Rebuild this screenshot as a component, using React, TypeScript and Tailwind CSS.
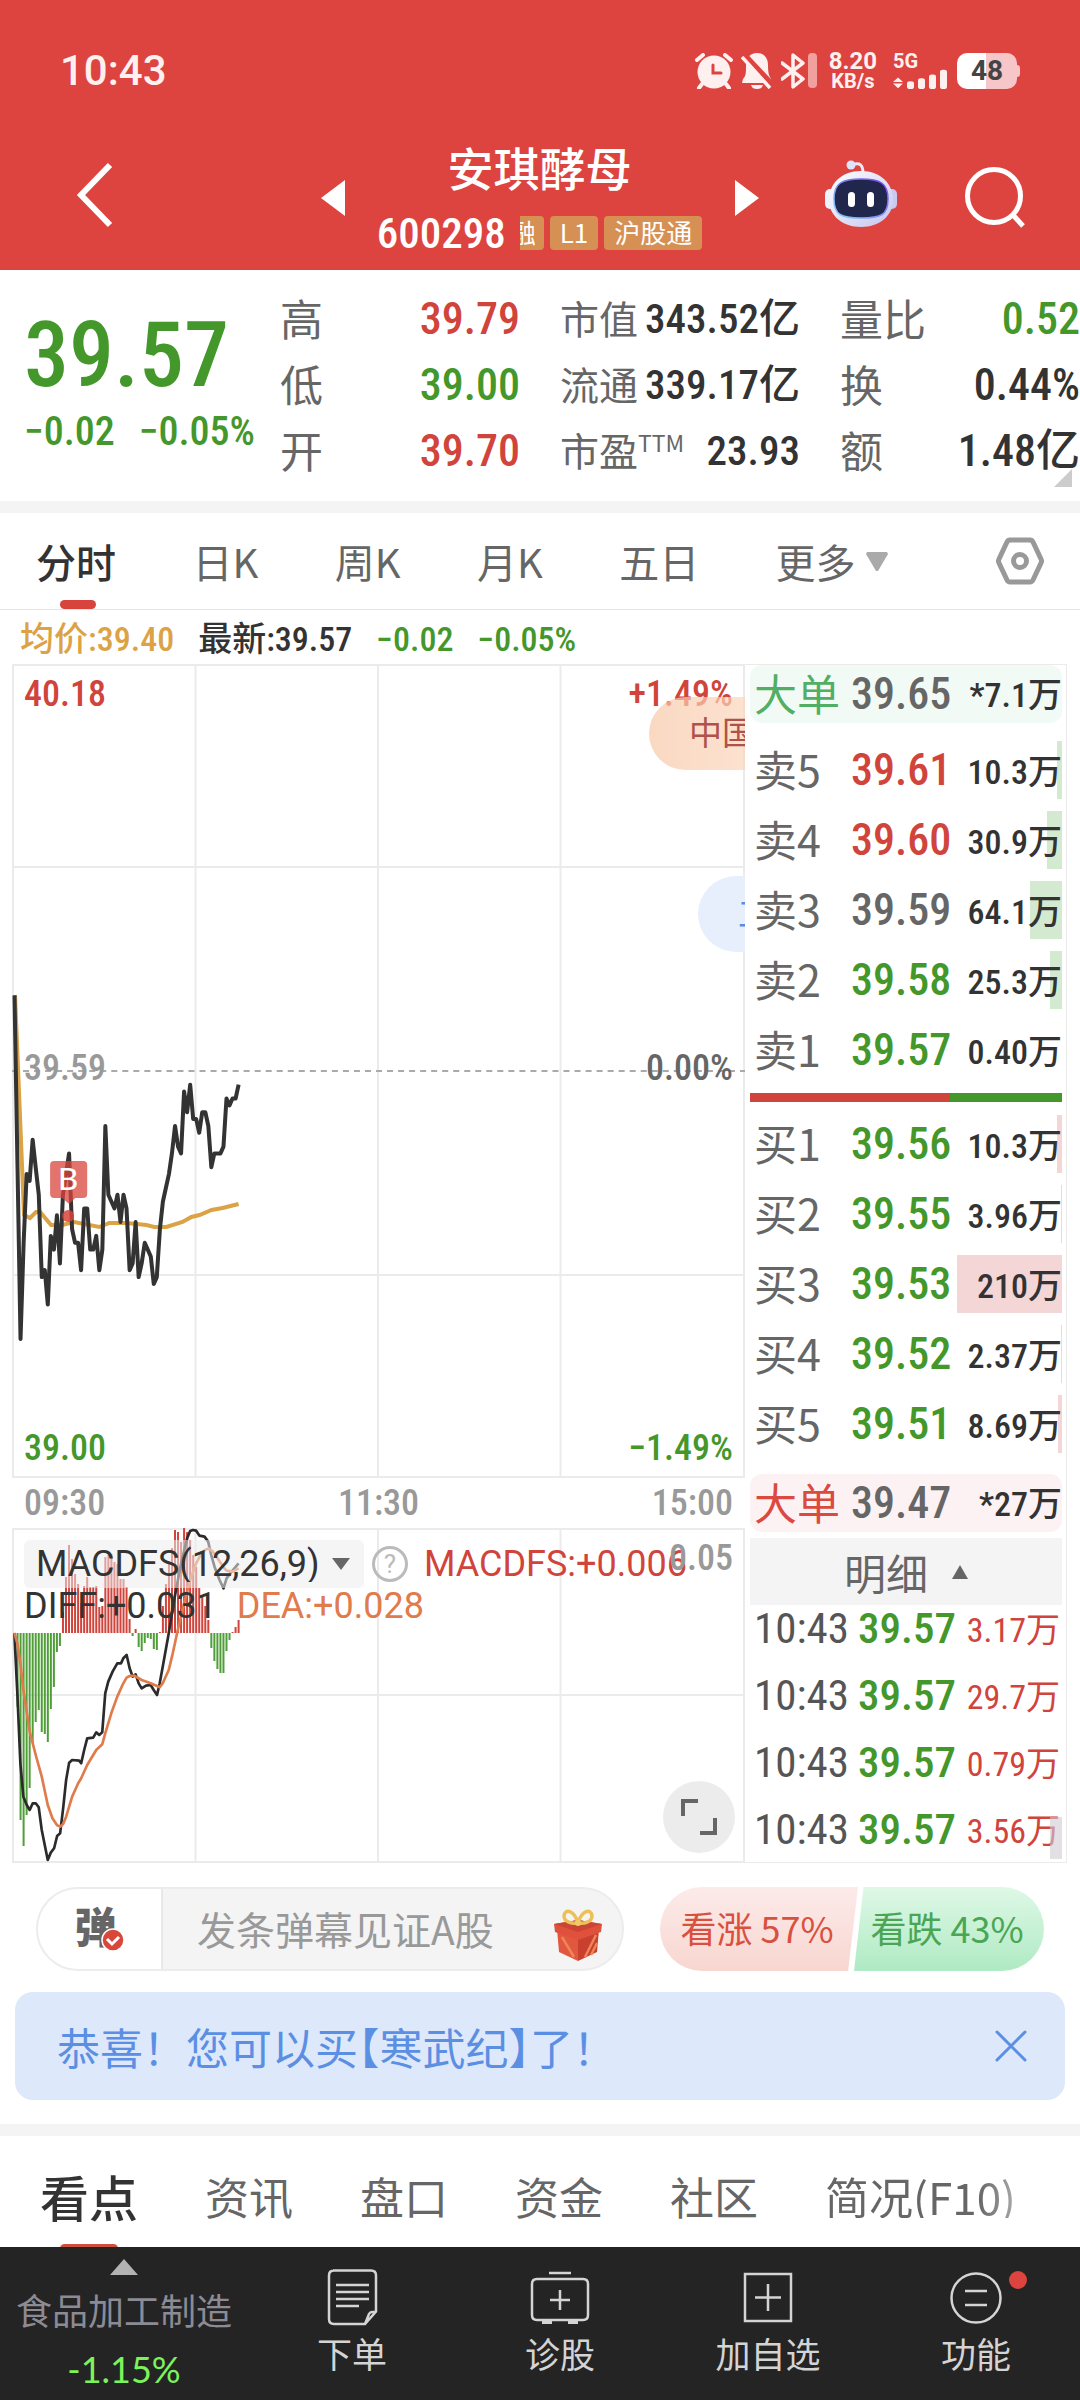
import React from 'react';

const NUM = "[font-family:'Roboto_Condensed','Liberation_Sans_Narrow',Roboto,'Noto_Sans_CJK_SC',sans-serif]";

const RED = 'text-[#d0443c]';
const GREEN = 'text-[#44972b]';
const GRAY = 'text-[#666666]';
const DARK = 'text-[#333333]';

const PREV_CLOSE = 39.59;
const MINUTE = 3.02;

// Last price of every minute since 09:30, in cents above 39.00
const prices = [
  70, 45, 20, 34, 44, 43, 49, 45, 41, 29, 30, 25, 35, 33, 38, 31, 41, 44, 47, 36, 34, 34, 30, 39, 39,
  33, 33, 35, 30, 33, 51, 41, 40, 39, 41, 37, 41, 39, 30, 31, 37, 29, 31, 34, 33, 32, 28, 29, 36, 40,
  42, 44, 47, 51, 48, 47, 56, 53, 57, 52, 52, 50, 53, 53, 51, 45, 47, 47, 47, 48, 55, 54, 55, 55, 57,
];

const macdBars = [
  0, -74, -187, -213, -182, -155, -110, -89, -77, -99, -101, -109, -76, -54, -19, -13, 21, 56, 88, 74, 59, 49, 30, 47, 56,
  46, 46, 47, 26, 27, 76, 78, 79, 71, 69, 54, 54, 46, 14, -3, 4, -14, -18, -10, -5, -6, -16, -17, 1, 27,
  49, 71, 85, 103, 101, 91, 105, 101, 93, 78, 66, 45, 36, 27, 13, -15, -28, -36, -40, -40, -18, -7, 1, 6, 13,
];

const pricePoints = prices
  .map((p, i) => `${(2.5 + i * MINUTE).toFixed(1)},${(407 + (PREV_CLOSE * 100 - 3900 - p) * 6.87).toFixed(1)}`)
  .join(' ');

const avgPoints =
  '3,331 12,551 18,554 24,548 28,548 39,561 50,561 62,558 87,563 97,559 114,559 134,561 142,563 154,563 170,558 179,553 187,551 199,546 210,544 226,540';

const diffPoints =
  '46,459 55,640 64,850 73,950 83,975 92,990 101,970 110,970 119,982 128,1050 146,1140 155,1118 165,1105 174,1068 183,1060 192,985 201,900 210,848 219,840 240,842 246,850 255,810 264,775 282,773 291,757 300,765 309,757 318,640 327,605 340,575 354,550 365,550 372,535 382,525 391,565 400,590 409,583 418,610 427,625 440,617 454,615 463,630 473,645 481,610 490,560 508,460 526,350 545,250 563,175 572,153 580,150 590,152 600,167 615,170 626,185 635,225 645,260 660,300 672,325 681,295 700,270 717,250';

const deaPoints =
  '46,459 55,490 64,550 73,630 92,755 110,825 128,890 146,975 160,1015 174,1036 183,1040 192,1032 201,1010 219,950 237,910 246,895 264,855 291,810 309,793 318,760 336,700 354,650 372,610 382,593 391,588 405,587 427,600 454,610 481,622 490,610 508,570 520,520 535,450 554,370 572,300 590,250 605,222 617,210 627,205 640,215 654,235 672,262 681,272 700,275 717,265';

interface Level {
  label: string;
  price: string;
  volume: string;
  bar: number;
  color: string;
}

const sells: Level[] = [
  { label: '卖5', price: '39.61', volume: '10.3万', bar: 5, color: RED },
  { label: '卖4', price: '39.60', volume: '30.9万', bar: 15, color: RED },
  { label: '卖3', price: '39.59', volume: '64.1万', bar: 32, color: GRAY },
  { label: '卖2', price: '39.58', volume: '25.3万', bar: 12, color: GREEN },
  { label: '卖1', price: '39.57', volume: '0.40万', bar: 0, color: GREEN },
];

const buys: Level[] = [
  { label: '买1', price: '39.56', volume: '10.3万', bar: 5, color: GREEN },
  { label: '买2', price: '39.55', volume: '3.96万', bar: 1, color: GREEN },
  { label: '买3', price: '39.53', volume: '210万', bar: 105, color: GREEN },
  { label: '买4', price: '39.52', volume: '2.37万', bar: 1, color: GREEN },
  { label: '买5', price: '39.51', volume: '8.69万', bar: 4, color: GREEN },
];

const trades = ['3.17万', '29.7万', '0.79万', '3.56万'];

const StatusBar: React.FC = () => (
  <div className="flex h-[142px] items-center justify-between pl-15 pr-15 text-[#fff0f0]">
    <span className="font-[Roboto] text-[42px] font-medium leading-none">10:43</span>
    <div className="flex items-center gap-2">
      <svg className="h-9 w-[38px]" viewBox="0 0 38 36" fill="none" stroke="currentColor" strokeWidth="4" strokeLinecap="round">
        <circle cx="19" cy="19" r="16.5" fill="currentColor" stroke="none" />
        <path d="M2 7 8 2M36 7l-6-5M7 31l-3 4M31 31l3 4" />
        <path d="M18 12v8h8" stroke="#dd443f" strokeWidth="3" />
      </svg>
      <svg className="h-9 w-8" viewBox="0 0 32 36" fill="none">
        <path d="M16 0c7 0 11 5 11 12 0 8 1 11 3 14l1 4H1l1-4c3-3 3-6 3-14C5 5 9 0 16 0Z" fill="currentColor" />
        <path d="M10 32h12c-1 3-3 4-6 4s-5-1-6-4Z" fill="currentColor" />
        <path d="M3 1l29 31" stroke="#dd443f" strokeWidth="5" />
        <path d="M1 4l28 31" stroke="currentColor" strokeWidth="3.5" />
      </svg>
      <svg className="h-9 w-9" viewBox="0 0 36 36" fill="none">
        <path d="M1 10l21 16-10 8V2l10 8L1 26" stroke="currentColor" strokeWidth="3.5" strokeLinejoin="round" strokeLinecap="round" />
        <rect x="27" y="0" width="9" height="35" rx="4" fill="#f2a09e" />
      </svg>
      <div className="ml-1 flex flex-col items-center font-[Roboto] font-bold">
        <span className="text-[24px] leading-5">8.20</span>
        <span className="text-[20px] leading-5">KB/s</span>
      </div>
      <div className="ml-2 flex flex-col items-start">
        <span className="font-[Roboto] text-[20px] font-bold leading-4">5G</span>
        <svg className="h-5 w-[54px]" viewBox="0 0 54 26" preserveAspectRatio="none" fill="currentColor">
          <path d="M5 11l5 6H0zM5 25l5-6H0z" />
          <rect x="14" y="16" width="7" height="10" rx="3" />
          <rect x="25" y="12" width="7" height="14" rx="3" />
          <rect x="36" y="7" width="7" height="19" rx="3" />
          <rect x="47" y="1" width="7" height="25" rx="3" />
        </svg>
      </div>
      <div className="ml-0.5 flex items-center">
        <div className="flex h-9 w-[60px] items-center justify-center rounded-[10px] bg-linear-to-r from-white from-48% to-[#f6c6c8] to-48%">
          <span className="font-[Roboto] text-[28px] font-bold leading-none text-[#444444]">48</span>
        </div>
        <div className="h-3 w-[3px] rounded-r-sm bg-[#f6c6c8]" />
      </div>
    </div>
  </div>
);

const RobotIcon: React.FC = () => (
  <svg className="h-[68px] w-[72px]" viewBox="0 0 72 68">
    <defs>
      <linearGradient id="shell" x1="0" y1="0" x2="1" y2="1">
        <stop offset="0" stopColor="#ffffff" />
        <stop offset="1" stopColor="#c5c5ee" />
      </linearGradient>
      <linearGradient id="rim" x1="0" y1="1" x2="1" y2="0">
        <stop offset="0" stopColor="#7fd4f5" />
        <stop offset="1" stopColor="#7d3ff0" />
      </linearGradient>
    </defs>
    <path d="M27 5c8-3 11 0 11 8" fill="none" stroke="#e8e8fb" strokeWidth="3" />
    <circle cx="26" cy="5" r="4.5" fill="#dfe3fa" />
    <rect x="0" y="29" width="12" height="20" rx="5" fill="#eef0fc" />
    <rect x="60" y="29" width="12" height="20" rx="5" fill="#c9caf2" />
    <path d="M36 11c20 0 32 13 32 29S54 67 36 67 4 56 4 40 16 11 36 11Z" fill="url(#shell)" />
    <path d="M36 19c19 0 27 4 27 20s-7 19-27 19S9 55 9 39s8-20 27-20Z" fill="#20264c" stroke="url(#rim)" strokeWidth="1.5" />
    <rect x="23" y="32" width="7" height="15" rx="3.5" fill="#fff" />
    <rect x="42" y="32" width="7" height="15" rx="3.5" fill="#fff" />
  </svg>
);

const Header: React.FC = () => (
  <header className="bg-[#dd443f] text-white">
    <StatusBar />
    <div className="flex h-32 items-start justify-between pl-[76px] pr-[54px]">
      <button aria-label="返回" className="mt-5">
        <svg className="h-[66px] w-[38px]" viewBox="0 0 38 66" fill="none" stroke="currentColor" strokeWidth="6">
          <path d="M34 3 5 33l29 30" />
        </svg>
      </button>
      <div className="ml-[140px] flex items-start">
        <button aria-label="上一只" className="mt-[38px]">
          <svg className="h-9 w-6" viewBox="0 0 24 36" fill="currentColor"><path d="M0 18 24 0v36z" /></svg>
        </button>
        <div className="flex w-[390px] flex-col items-center">
          <h1 className="font-['Noto_Sans_CJK_SC'] text-[46px] font-medium leading-[48px]">安琪酵母</h1>
          <div className="mt-6 flex items-center gap-1.5">
            <span className={`${NUM} mr-2 text-[43px] font-medium leading-[38px]`}>600298</span>
            <span className="flex h-[34px] w-6 justify-end overflow-hidden rounded-r bg-[#d79053] pr-2 font-['Noto_Sans_CJK_SC'] text-[26px] leading-[32px]">融</span>
            <span className="h-[34px] rounded bg-[#d79053] px-2.5 font-['Noto_Sans_CJK_SC'] text-[26px] leading-[32px]">L1</span>
            <span className="h-[34px] rounded bg-[#d79053] px-2.5 font-['Noto_Sans_CJK_SC'] text-[26px] leading-[32px]">沪股通</span>
          </div>
        </div>
        <button aria-label="下一只" className="mt-[38px]">
          <svg className="h-9 w-6" viewBox="0 0 24 36" fill="currentColor"><path d="M24 18 0 0v36z" /></svg>
        </button>
      </div>
      <div className="flex items-start gap-[68px]">
        <button aria-label="智能助手" className="mt-[18px]"><RobotIcon /></button>
        <button aria-label="搜索" className="mt-[25px]">
          <svg className="h-[61px] w-[61px]" viewBox="0 0 61 61" fill="none" stroke="currentColor" strokeWidth="5">
            <circle cx="29" cy="29" r="26.5" />
            <path d="m48 48 10 11" />
          </svg>
        </button>
      </div>
    </div>
  </header>
);

const Stat: React.FC<{ label: React.ReactNode; value: string; color: string; small?: boolean }> = ({ label, value, color, small }) => (
  <div className="flex h-[66px] items-center justify-between">
    <dt className={`flex whitespace-nowrap pb-1 text-[#666666] ${small ? 'text-[39px]' : 'text-[43px]'}`}>{label}</dt>
    <dd className={`${NUM} whitespace-nowrap font-medium ${color} ${small ? 'text-[41px]' : 'text-[44px]'}`}>{value}</dd>
  </div>
);

const Quote: React.FC = () => (
  <section className="relative flex h-[231px] pt-4 leading-none">
    <div className="w-[280px] shrink-0 pl-6">
      <p className={`${NUM} mt-6 text-[90px] font-medium leading-[92px] text-[#44972b]`}>39.57</p>
      <p className={`${NUM} mt-2 flex gap-6 whitespace-nowrap text-[40px] font-medium leading-[44px] text-[#44972b]`}>
        <span>−0.02</span>
        <span>−0.05%</span>
      </p>
    </div>
    <dl className="grid h-[198px] flex-1 grid-cols-3 gap-x-10">
      <Stat label="高" value="39.79" color={RED} />
      <Stat label="市值" value="343.52亿" color={DARK} small />
      <Stat label="量比" value="0.52" color={GREEN} />
      <Stat label="低" value="39.00" color={GREEN} />
      <Stat label="流通" value="339.17亿" color={DARK} small />
      <Stat label="换" value="0.44%" color={DARK} />
      <Stat label="开" value="39.70" color={RED} />
      <Stat label={<>市盈<sup className="top-0 self-start text-[23px] leading-6">TTM</sup></>} value="23.93" color={DARK} small />
      <Stat label="额" value="1.48亿" color={DARK} />
    </dl>
    <svg className="absolute bottom-3.5 right-2 h-[18px] w-[18px]" viewBox="0 0 18 18" fill="#cccccc"><path d="M18 0v18H0z" /></svg>
  </section>
);

const PeriodTabs: React.FC = () => (
  <nav className="flex h-[97px] items-center justify-between border-b border-[#e5e5e5] pl-9 pr-9 text-[40px] leading-none text-[#666666]">
    <button className="relative h-full font-medium text-[#333333]">
      分时
      <span className="absolute bottom-0 left-6 h-[9px] w-9 rounded-full bg-[#d8443c]" />
    </button>
    <button>日K</button>
    <button>周K</button>
    <button>月K</button>
    <button>五日</button>
    <button className="flex items-center gap-2.5">
      更多
      <svg className="h-[19px] w-[22px]" viewBox="0 0 22 19" fill="#aaaaaa"><path d="M1 0h20l1 2-10 17h-2L0 2z" /></svg>
    </button>
    <button aria-label="设置" className="ml-8">
      <svg className="h-12 w-12" viewBox="0 0 48 48" fill="none" stroke="#999999" strokeWidth="5" strokeLinejoin="round">
        <path d="M14 3h20q2 0 3 2l8 17q1 2 0 4l-8 17q-1 2-3 2H14q-2 0-3-2L3 26q-1-2 0-4l8-17q1-2 3-2Z" />
        <circle cx="24" cy="24" r="6.5" />
      </svg>
    </button>
  </nav>
);

const PriceChart: React.FC = () => (
  <div className={`${NUM} relative h-[814px] overflow-hidden text-[36px] font-medium leading-none`}>
    <svg className="absolute inset-0 h-full w-full" viewBox="0 0 731 814" preserveAspectRatio="none" fill="none">
      <path d="M1 0v814M183 0v814M365 0v814M547 0v814M730 0v814M0 1h731M0 203h731M0 611h731M0 813h731" stroke="#ebebeb" strokeWidth="2" />
      <path d="M0 407h731" stroke="#aaaaaa" strokeWidth="2" strokeDasharray="6 5" />
      <polyline points={avgPoints} stroke="#dba345" strokeWidth="4" />
      <polyline points={pricePoints} stroke="#333333" strokeWidth="4" strokeLinejoin="round" />
      <rect x="38" y="497" width="37" height="37" rx="4" fill="#d8443c" fillOpacity="0.75" />
      <path d="M50 534h13l-6 6z" fill="#d8443c" fillOpacity="0.75" />
      <circle cx="56" cy="552" r="6" fill="#d8443c" fillOpacity="0.85" />
      <text x="56" y="526" textAnchor="middle" fontSize="31" fontFamily="Lato" fill="#fff">B</text>
    </svg>
    <span className="absolute left-3 top-3 text-[#d0443c]">40.18</span>
    <span className="absolute right-3 top-3 text-[#d0443c]">+1.49%</span>
    <span className="absolute left-3 top-[386px] text-[#999999]">39.59</span>
    <span className="absolute right-3 top-[386px] text-[#666666]">0.00%</span>
    <span className="absolute bottom-3 left-3 text-[#44972b]">39.00</span>
    <span className="absolute bottom-3 right-3 text-[#44972b]">−1.49%</span>
    {/* danmaku bubbles drifting in from the right edge */}
    <div className="absolute -right-24 top-[33px] h-[73px] w-[192px] rounded-full bg-linear-to-r from-[#f8c8a8]/70 to-[#fde3cf]/70 pl-10 font-['Noto_Sans_CJK_SC'] text-[33px] font-normal leading-[68px] text-[#b0524a]">中国</div>
    <div className="absolute -right-24 top-[212px] h-[76px] w-[143px] rounded-full bg-[#e6effb] pl-10 font-['Noto_Sans_CJK_SC'] text-[33px] font-normal leading-[72px] text-[#5b8de0]">工</div>
  </div>
);

const MacdChart: React.FC = () => (
  <div className="relative h-[335px] overflow-hidden">
    <svg className="absolute inset-0 h-full w-full" viewBox="0 0 731 335" preserveAspectRatio="none" fill="none">
      <path d="M1 0v335M183 0v335M365 0v335M547 0v335M730 0v335M0 1h731M0 167h731M0 334h731" stroke="#ebebeb" strokeWidth="2" />
      {macdBars.map((v, i) => (
        <rect
          key={i}
          x={1.5 + i * MINUTE}
          y={v > 0 ? 105 - v : 105}
          width="2"
          height={Math.abs(v)}
          fill={v > 0 ? '#d0443c' : '#4f9e38'}
        />
      ))}
      <g transform="translate(-13 -48) scale(0.3333)" strokeLinejoin="round" strokeWidth="8">
        <polyline points={diffPoints} stroke="#2b2b2b" />
        <polyline points={deaPoints} stroke="#e07b4c" />
      </g>
    </svg>
    <div className="absolute left-3 right-3 top-3 font-[Roboto] text-[36px] leading-none">
      <div className="flex items-center whitespace-nowrap">
        <div className="relative flex items-center">
          <select aria-label="指标" className="h-12 w-[340px] appearance-none rounded-md bg-[#ededed]/55 pl-3 text-[36px] text-[#333333]">
            <option>MACDFS(12,26,9)</option>
          </select>
          <svg className="pointer-events-none absolute right-3.5 h-3 w-[18px]" viewBox="0 0 18 12" fill="#666666"><path d="M0 0h18L9 12z" /></svg>
        </div>
        <button aria-label="说明" className="ml-2 h-9 w-9 shrink-0 rounded-full border-[3px] border-[#bbbbbb] text-[26px] leading-none text-[#bbbbbb]">?</button>
        <span className="ml-4 text-[#d0443c]">MACDFS:+0.006</span>
      </div>
      <div className="flex gap-5">
        <span className="text-[#333333]">DIFF:+0.031</span>
        <span className="text-[#e07b4c]">DEA:+0.028</span>
      </div>
    </div>
    <span className={`${NUM} absolute right-3 top-3 text-[36px] font-medium leading-none text-[#999999]`}>0.05</span>
    <button aria-label="全屏" className="absolute bottom-2.5 right-2.5 flex h-[72px] w-[72px] items-center justify-center rounded-full bg-[#ececec]">
      <svg className="h-9 w-9" viewBox="0 0 36 36" fill="none" stroke="#666666" strokeWidth="4">
        <path d="M2 17V2h15M19 34h15V19" />
      </svg>
    </button>
  </div>
);

const BigOrder: React.FC<{ price: string; volume: string; tone: string }> = ({ price, volume, tone }) => (
  <div className={`flex h-[58px] items-center rounded-xl pl-1 leading-none ${tone}`}>
    <span className="w-[97px] pb-1 text-[43px]">大单</span>
    <span className={`${NUM} text-[44px] font-medium text-[#666666]`}>{price}</span>
    <span className={`${NUM} ml-auto pt-0.5 text-[34px] font-medium text-[#333333]`}>{volume}</span>
  </div>
);

const Levels: React.FC<{ rows: Level[]; barColor: string }> = ({ rows, barColor }) => (
  <table className="w-full table-fixed leading-none">
    <tbody>
      {rows.map((r) => (
        <tr key={r.label} className="h-[70px]">
          <th scope="row" className="w-[101px] p-0 pb-1 pl-1 text-left text-[43px] font-normal text-[#666666]">{r.label}</th>
          <td className={`${NUM} w-[99px] p-0 text-[44px] font-medium ${r.color}`}>{r.price}</td>
          <td className="relative p-0">
            <span className={`absolute right-0 top-1.5 h-[58px] ${barColor}`} style={{ width: r.bar }} />
            <span className={`${NUM} relative block whitespace-nowrap pt-1 text-right text-[34px] font-medium text-[#333333]`}>{r.volume}</span>
          </td>
        </tr>
      ))}
    </tbody>
  </table>
);

const OrderBook: React.FC = () => (
  <aside className="h-full w-[322px] shrink-0 border-y border-r border-[#ebebeb] pl-[5px] pr-1">
    <BigOrder price="39.65" volume="*7.1万" tone="bg-[#f2faf6] text-[#52ae64]" />
    <div className="mt-3">
      <Levels rows={sells} barColor="bg-[#d3ead0]" />
    </div>
    <div className="mb-[7px] mt-2 flex h-[9px] bg-[#44972b]">
      <div className="w-[64%] bg-[#d0443c]" />
    </div>
    <Levels rows={buys} barColor="bg-[#f4d6d7]" />
    <div className="mt-[15px]">
      <BigOrder price="39.47" volume="*27万" tone="bg-[#fdf2f3] text-[#db4a3f]" />
    </div>
    <button className="mt-1.5 flex h-[67px] w-full items-center justify-center gap-6 bg-[#f4f4f4] text-[42px] leading-none text-[#666666]">
      明细
      <svg className="h-3.5 w-4" viewBox="0 0 16 14" fill="#666666"><path d="M8 0l8 14H0z" /></svg>
    </button>
    <div className="relative h-[256px] overflow-hidden">
      <table className={`${NUM} w-full table-fixed`}>
        <tbody>
          {trades.map((t) => (
            <tr key={t} className="h-[67px] whitespace-nowrap align-top">
              <td className="w-[108px] p-0 pl-1 text-[43px] leading-[46px] text-[#555555]">10:43</td>
              <td className="w-[100px] p-0 text-[43px] font-medium leading-[46px] text-[#44972b]">39.57</td>
              <td className="p-0 pr-0.5 text-right text-[34px] leading-[50px] text-[#d0443c]">{t}</td>
            </tr>
          ))}
        </tbody>
      </table>
      <div className="absolute bottom-0.5 right-0 h-[42px] w-3 bg-[#cfcbd4]/60" />
    </div>
  </aside>
);

const Market: React.FC = () => (
  <section>
    <div className={`${NUM} flex h-[54px] items-center gap-6 pl-5 pt-1 text-[34px] font-medium leading-none`}>
      <span className="text-[#dba345]">均价:39.40</span>
      <span className="text-[#333333]">最新:39.57</span>
      <span className="text-[#44972b]">−0.02</span>
      <span className="text-[#44972b]">−0.05%</span>
    </div>
    <div className="flex h-[1199px] pl-3 pr-[13px]">
      <div className="min-w-0 flex-1">
        <PriceChart />
        <div className={`${NUM} flex h-[50px] items-center justify-between px-3 text-[36px] font-medium leading-none text-[#999999]`}>
          <span>09:30</span>
          <span>11:30</span>
          <span>15:00</span>
        </div>
        <MacdChart />
      </div>
      <OrderBook />
    </div>
  </section>
);

const GiftIcon: React.FC = () => (
  <svg className="h-[52px] w-12" viewBox="0 0 48 52">
    <path d="M3 20l21 9v23L5 43z" fill="#e2573f" />
    <path d="M45 20l-21 9v23l19-9z" fill="#c9402f" />
    <path d="M0 15 24 11l24 4-1 8-23 8-23-8z" fill="#e0513d" />
    <path d="M0 15 24 11l24 4-24 8z" fill="#cc4434" />
    <path d="M8 28l12 20M31 48l11-22M37 46l6-12" stroke="#ee8557" strokeWidth="2.5" />
    <path d="M24 14C20 1 11-1 10 7c0 6 8 8 14 7ZM24 14C28 1 37-1 38 7c0 6-8 8-14 7Z" fill="none" stroke="#ecc055" strokeWidth="3.5" />
    <circle cx="24" cy="14" r="3" fill="#f0cb6a" />
  </svg>
);

const CommentBar: React.FC = () => (
  <section className="mt-6 flex h-[84px] justify-between pl-9 pr-9 leading-none">
    <div className="flex w-[588px] overflow-hidden rounded-full border-2 border-[#ececec] bg-[#f4f4f4]">
      <button aria-label="弹幕开关" className="relative w-[125px] shrink-0 border-r-2 border-[#e8e8e8] bg-white pb-2 pr-2 text-[42px] font-black text-[#666666]">
        弹
        <svg className="absolute bottom-[17px] right-9 h-6 w-6" viewBox="0 0 24 24" fill="none">
          <circle cx="12" cy="12" r="11" fill="#d8473a" stroke="#fff" strokeWidth="1.5" />
          <path d="m6 11 5 5 7-7" stroke="#fff" strokeWidth="3" />
        </svg>
      </button>
      <input
        aria-label="发弹幕"
        placeholder="发条弹幕见证A股"
        className="min-w-0 flex-1 bg-transparent pb-0.5 pl-[34px] text-[39px] outline-none placeholder:text-[#999999]"
      />
      <button aria-label="礼物" className="mr-5 mt-3"><GiftIcon /></button>
    </div>
    <div className="flex w-[384px] text-[36px]">
      <button className="-mr-1 w-[198px] whitespace-nowrap rounded-l-full bg-linear-to-b from-[#fcebea] to-[#f8d6d0] pb-1 pr-1 text-[#d9503f] [clip-path:polygon(0_0,100%_0,95%_100%,0_100%)]">看涨 57%</button>
      <button className="flex-1 whitespace-nowrap rounded-r-full bg-linear-to-b from-[#dff8e7] to-[#aeeac3] pb-1 pr-1 text-[#4aa655] [clip-path:polygon(5%_0,100%_0,100%_100%,0_100%)]">看跌 43%</button>
    </div>
  </section>
);

const InfoTabs: React.FC = () => (
  <nav className="flex h-[111px] items-center justify-between overflow-hidden pl-10 pr-16 pt-2 text-[44px] leading-none text-[#666666]">
    <button className="relative h-full text-[49px] font-medium text-[#333333]">
      看点
      <span className="absolute -bottom-1.5 left-5 h-[9px] w-[58px] rounded-full bg-[#d0503f]" />
    </button>
    <button>资讯</button>
    <button>盘口</button>
    <button>资金</button>
    <button>社区</button>
    <button className="bg-linear-to-r from-[#666666] from-80% to-[#aaaaaa] bg-clip-text text-transparent">简况(F10)</button>
  </nav>
);

const NavItem: React.FC<{ label: string; children: React.ReactNode }> = ({ label, children }) => (
  <button className="flex flex-1 flex-col items-center pt-5">
    <svg className="h-15 w-[60px] overflow-visible" viewBox="0 0 60 60" fill="none" stroke="#d4d4d4" strokeWidth="2.5">{children}</svg>
    <span className="mt-1.5 text-[35px] leading-10 text-[#d4d4d4]">{label}</span>
  </button>
);

const BottomBar: React.FC = () => (
  <footer className="flex h-[153px] bg-[#242424] leading-none">
    <button className="flex w-[248px] flex-col items-center pt-3">
      <svg className="h-4 w-7" viewBox="0 0 28 16" fill="#b3b3b3"><path d="M14 0l14 16H0z" /></svg>
      <span className="mt-3.5 text-[36px] leading-10 text-[#8c8b95]">食品加工制造</span>
      <span className="mt-5 font-[Lato] text-[36px] leading-10 text-[#7cf35b]">-1.15%</span>
    </button>
    <NavItem label="下单">
      <path d="M11 3.500h38q5 0 5 5v36L43 57H12q-5 0-5-5V8.500q0-5 5-5ZM54 45h-4q-2 0-3 2l-4 10" />
      <path d="M14 18h33M14 25h33M14 32h33M14 39h23" />
    </NavItem>
    <NavItem label="诊股">
      <path d="M19 6h22M7 12h46q5 0 5 5v31q0 5-5 5H7q-5 0-5-5V17q0-5 5-5ZM30 23v20M20 33h20" />
      <path d="M12 55h10M38 55h10" strokeWidth="4" />
    </NavItem>
    <NavItem label="加自选">
      <path d="M7 7h46v47H7zM30 17v27M17 30.500h26" />
    </NavItem>
    <NavItem label="功能">
      <circle cx="30" cy="31" r="24.500" />
      <path d="M19 24h22M19 38h22" />
      <circle cx="72" cy="13" r="9" fill="#dd443f" stroke="none" />
    </NavItem>
  </footer>
);

export default function App() {
  return (
    <main className="w-full overflow-hidden bg-white font-['Noto_Sans_CJK_SC',sans-serif]">
      <Header />
      <Quote />
      <div className="h-3 bg-[#f4f4f4]" />
      <PeriodTabs />
      <Market />
      <CommentBar />
      <div className="mx-[15px] mt-[21px] flex h-[108px] items-center justify-between rounded-[18px] bg-[#dde8fa] pl-[42px] pr-[38px] text-[43px] leading-none text-[#5b8fe3]">
        <a href="#promo">
          恭喜！您可以买
          <span className="[font-feature-settings:'halt']">【</span>寒武纪<span className="[font-feature-settings:'halt']">】</span>
          了！
        </a>
        <button aria-label="关闭">
          <svg className="h-8 w-8" viewBox="0 0 32 32" stroke="currentColor" strokeWidth="3" strokeLinecap="round"><path d="m2 2 28 28M30 2 2 30" /></svg>
        </button>
      </div>
      <div className="mt-6 h-3 bg-[#f4f4f4]" />
      <InfoTabs />
      <BottomBar />
    </main>
  );
}
